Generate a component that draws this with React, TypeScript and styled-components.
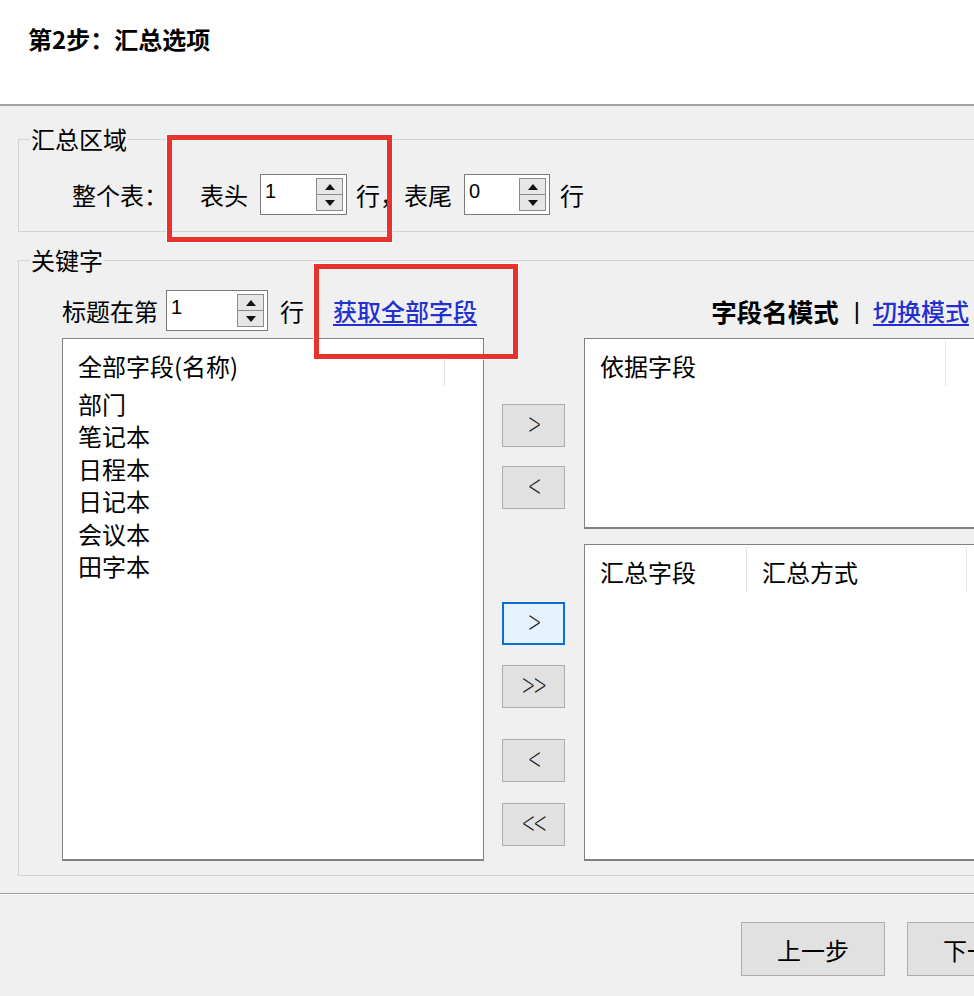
import React from "react";
import styled, { createGlobalStyle } from "styled-components";

const FONT = `"Noto Sans CJK SC", "Noto Sans", sans-serif`;

const GlobalStyle = createGlobalStyle`
  html, body {
    margin: 0;
    padding: 0;
    overflow: hidden;
    background: #f0f0f0;
  }
  body {
    font-family: ${FONT};
    color: #000;
  }
`;

function App() {
  return <>
    <GlobalStyle />
    <Window>
      <Header>
        <Title>第2步：汇总选项</Title>
      </Header>
      <Body>
        <Group $top={20}>
          <Legend>汇总区域</Legend>
          <GroupContent $pad="22px 0 16px 53px">
            <Row>
              <Label>整个表：</Label>
              <Label $ml={32}>表头</Label>
              <Spin value="1" width={87} ml={12} />
              <Label $ml={9}>行，表尾</Label>
              <Spin value="0" width={86} ml={12} />
              <Label $ml={10}>行</Label>
            </Row>
          </GroupContent>
        </Group>
        <Group $top={15}>
          <Legend>关键字</Legend>
          <GroupContent $pad="17px 9px 14px 43px">
            <Row>
              <Label>标题在第</Label>
              <Spin value="1" width={102} ml={8} />
              <Label $ml={12}>行</Label>
              <Link $ml={29}>获取全部字段</Link>
              <ModeSwitch>
                <ModeLabel>字段名模式</ModeLabel>
                <ModeDivider>|</ModeDivider>
                <Link>切换模式</Link>
              </ModeSwitch>
            </Row>
            <Main>
              <FieldList />
              <ButtonColumn>
                <MoveButton $top={66}><Glyph>&gt;</Glyph></MoveButton>
                <MoveButton $top={19}><Glyph>&lt;</Glyph></MoveButton>
                <MoveButton $top={93} $focused><Glyph>&gt;</Glyph></MoveButton>
                <MoveButton $top={20}><Glyph>&gt;&gt;</Glyph></MoveButton>
                <MoveButton $top={31}><Glyph>&lt;</Glyph></MoveButton>
                <MoveButton $top={21}><Glyph>&lt;&lt;</Glyph></MoveButton>
              </ButtonColumn>
              <RightColumn>
                <ListBox $height={191}>
                  <ListHeader>
                    <HeaderCell $w={361}>依据字段</HeaderCell>
                  </ListHeader>
                </ListBox>
                <ListBox $grow>
                  <ListHeader>
                    <HeaderCell $w={162}>汇总字段</HeaderCell>
                    <HeaderCell $w={220}>汇总方式</HeaderCell>
                  </ListHeader>
                </ListBox>
              </RightColumn>
            </Main>
          </GroupContent>
        </Group>
      </Body>
      <Footer>
        <FooterButton>上一步</FooterButton>
        <FooterButton>下一步</FooterButton>
      </Footer>
      <Callout $x={167} $y={135} $w={225} $h={107} />
      <Callout $x={314} $y={264} $w={204} $h={95} />
    </Window>
  </>;
}

const fields = ["部门", "笔记本", "日程本", "日记本", "会议本", "田字本"];

function FieldList() {
  const items = fields.map((f, idx) => <ListItem key={idx}>{f}</ListItem>);
  return <ListBox $width={422}>
    <ListHeader>
      <HeaderCell $w={382} $lineTop={20}>全部字段(名称)</HeaderCell>
    </ListHeader>
    <ListItems>{items}</ListItems>
  </ListBox>;
}

interface SpinProps {
  readonly value: string;
  readonly width: number;
  readonly ml: number;
}
function Spin({ value, width, ml }: SpinProps) {
  return <SpinBox $w={width} $ml={ml}>
    <SpinValue>{value}</SpinValue>
    <Spinner>
      <SpinHalf $up />
      <SpinHalf />
    </Spinner>
  </SpinBox>;
}

const Window = styled.div`
  position: relative;
  width: 1016px;
  height: 996px;
  background: #f0f0f0;
`;

const Header = styled.div`
  box-sizing: border-box;
  height: 106px;
  background: #fff;
  border-bottom: 2px solid #a3a3a3;
  padding: 23px 0 0 28px;
`;

const Title = styled.h1`
  margin: 0;
  font-family: ${FONT};
  font-size: 24px;
  font-weight: 700;
  line-height: 32px;
`;

const Body = styled.div`
  padding: 0 6px 0 18px;
`;

const Group = styled.fieldset<{ $top: number }>`
  margin: ${({ $top }) => $top}px 0 0 0;
  padding: 0;
  min-width: 0;
  border: 1px solid #d2d2d2;
`;

const Legend = styled.legend`
  margin-left: 11px;
  padding: 0 1px;
  font-size: 24px;
  line-height: 26px;
`;

const GroupContent = styled.div<{ $pad: string }>`
  padding: ${({ $pad }) => $pad};
`;

const Row = styled.div`
  display: flex;
  align-items: center;
  height: 41px;
`;

const Label = styled.span<{ $ml?: number }>`
  margin-left: ${({ $ml }) => $ml || 0}px;
  font-size: 24px;
  line-height: 30px;
  white-space: nowrap;
`;

const Link = styled.span<{ $ml?: number }>`
  margin-left: ${({ $ml }) => $ml || 0}px;
  font-size: 24px;
  line-height: 30px;
  font-weight: 500;
  color: #2230d0;
  text-decoration: underline;
  text-underline-offset: 3px;
  white-space: nowrap;
`;

const ModeSwitch = styled.div`
  margin-left: auto;
  padding-right: 31px;
  display: flex;
  align-items: center;
`;

const ModeLabel = styled.span`
  font-size: 25.5px;
  font-weight: 700;
  line-height: 30px;
  white-space: nowrap;
`;

const ModeDivider = styled.span`
  margin: 0 13px 0 15px;
  font-family: "Liberation Sans", sans-serif;
  font-size: 24px;
  font-weight: 400;
`;

const SpinBox = styled.div<{ $w: number; $ml: number }>`
  box-sizing: border-box;
  width: ${({ $w }) => $w}px;
  height: 41px;
  margin-left: ${({ $ml }) => $ml}px;
  background: #fff;
  border: 1px solid #7a7a7a;
  display: flex;
  align-items: center;
`;

const SpinValue = styled.span`
  flex: 1;
  padding: 0 0 6px 4px;
  font-family: "Liberation Sans", sans-serif;
  font-size: 20px;
`;

const Spinner = styled.div`
  box-sizing: border-box;
  width: 27px;
  height: 33px;
  margin-right: 3px;
  border: 1px solid #8c8c8c;
  display: flex;
  flex-direction: column;
`;

const SpinHalf = styled.div<{ $up?: boolean }>`
  flex: 1;
  background: #e6e6e6;
  display: flex;
  align-items: center;
  justify-content: center;
  border-bottom: ${({ $up }) => $up ? "1px solid #8c8c8c" : "none"};

  &::after {
    content: "";
    border-left: 5px solid transparent;
    border-right: 5px solid transparent;
    ${({ $up }) => $up ? "border-bottom: 6px solid #111;" : "border-top: 6px solid #111;"}
  }
`;

const Main = styled.div`
  display: flex;
  height: 523px;
  margin-top: 7px;
`;

interface ListBoxProps {
  readonly $width?: number;
  readonly $height?: number;
  readonly $grow?: boolean;
}
const ListBox = styled.div<ListBoxProps>`
  box-sizing: border-box;
  ${({ $width }) => $width ? `width: ${$width}px; flex-shrink: 0;` : ""}
  ${({ $height }) => $height ? `height: ${$height}px;` : ""}
  ${({ $grow }) => $grow ? "flex: 1;" : ""}
  background: #fff;
  border: 1px solid #828282;
  border-bottom-width: 2px;
`;

const ListHeader = styled.div`
  display: flex;
  height: 47px;
`;

const HeaderCell = styled.div<{ $w: number; $lineTop?: number }>`
  position: relative;
  box-sizing: border-box;
  width: ${({ $w }) => $w}px;
  padding: 12px 0 0 15px;
  font-size: 24px;
  line-height: 30px;
  white-space: nowrap;

  &::after {
    content: "";
    position: absolute;
    right: 0;
    top: ${({ $lineTop }) => $lineTop || 2}px;
    bottom: 0;
    width: 1px;
    background: #e3e3e3;
  }
`;

const ListItems = styled.div`
  margin-top: 2px;
  padding-left: 15px;
`;

const ListItem = styled.div`
  font-size: 24px;
  line-height: 32.4px;
`;

const ButtonColumn = styled.div`
  width: 63px;
  margin: 0 19px 0 18px;
  display: flex;
  flex-direction: column;
  flex-shrink: 0;
`;

const MoveButton = styled.div<{ $top: number; $focused?: boolean }>`
  box-sizing: border-box;
  height: 43px;
  margin-top: ${({ $top }) => $top}px;
  background: ${({ $focused }) => $focused ? "#e5f1fb" : "#e1e1e1"};
  border: ${({ $focused }) => $focused ? "2px solid #0a6fd0" : "1px solid #adadad"};
  display: flex;
  align-items: center;
  justify-content: center;
`;

const Glyph = styled.span`
  display: inline-block;
  font-family: "DejaVu Sans", sans-serif;
  font-size: 30px;
  font-weight: 200;
  line-height: 1;
  color: #1a1a1a;
  transform: scaleX(0.55);
  letter-spacing: -4px;
  padding-bottom: 4px;
`;

const RightColumn = styled.div`
  flex: 1;
  display: flex;
  flex-direction: column;
  gap: 15px;
`;

const Footer = styled.div`
  margin-top: 17px;
  border-top: 1px solid #a0a0a0;
  box-shadow: inset 0 1px 0 #fafafa;
  padding: 28px 0 0 741px;
  display: flex;
  gap: 22px;
`;

const FooterButton = styled.div`
  box-sizing: border-box;
  width: 144px;
  height: 54px;
  flex-shrink: 0;
  background: #e1e1e1;
  border: 1px solid #adadad;
  display: flex;
  align-items: center;
  justify-content: center;
  font-size: 24px;
`;

interface CalloutProps {
  readonly $x: number;
  readonly $y: number;
  readonly $w: number;
  readonly $h: number;
}
const Callout = styled.div<CalloutProps>`
  position: absolute;
  left: ${({ $x }) => $x}px;
  top: ${({ $y }) => $y}px;
  width: ${({ $w }) => $w}px;
  height: ${({ $h }) => $h}px;
  box-sizing: border-box;
  border: 5px solid #e8322e;
  box-shadow: 0 0 0 1px rgba(255, 255, 255, 0.8);
  pointer-events: none;
`;

export default App;
